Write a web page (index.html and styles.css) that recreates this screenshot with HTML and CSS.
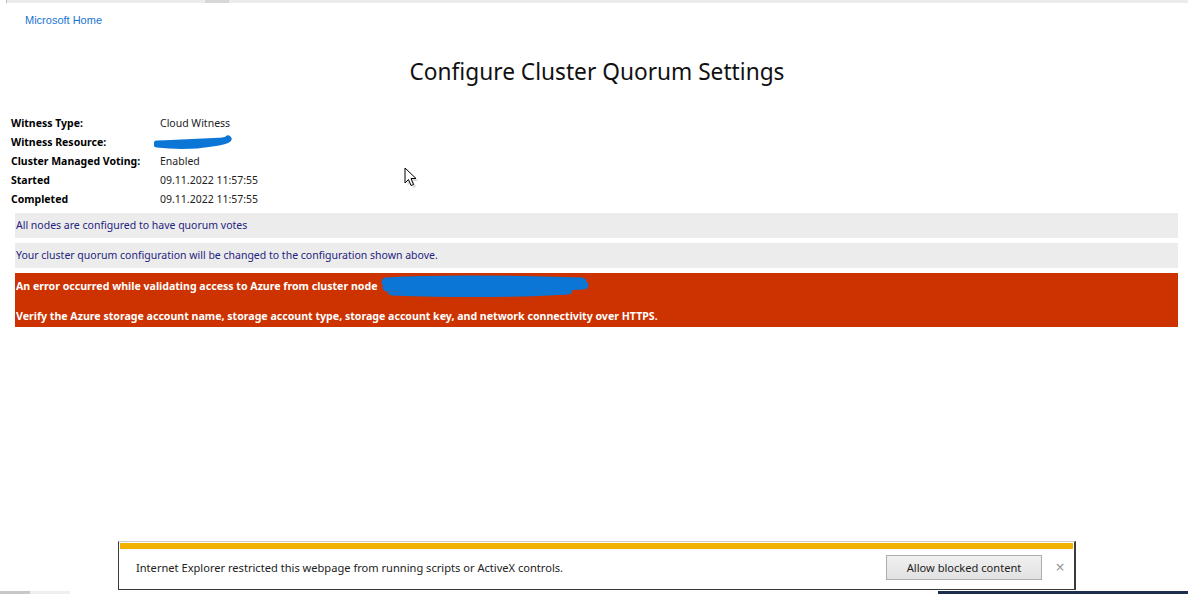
FILE: index.html
```html
<html>
	<head>
		<link rel="stylesheet" href="styles.css">
	</head>
	<body>
		<div class="topline"><span class="topline-tab"></span></div>
		<a class="home" href="#">Microsoft Home</a>
		<h1 class="title">Configure Cluster Quorum Settings</h1>

		<table class="summary">
			<tr><td class="label">Witness Type:</td><td class="value">Cloud Witness</td></tr>
			<tr><td class="label">Witness Resource:</td><td class="value">
				<svg class="scribble-small" width="80" height="16" viewBox="0 0 80 16"><path d="M3 10 C 20 12, 40 12, 58 9 C 66 8, 72 7, 74 5" fill="none" stroke="#0b76d6" stroke-width="7" stroke-linecap="round"/><path d="M6 9 L 70 6" fill="none" stroke="#0b76d6" stroke-width="5" stroke-linecap="round"/></svg>
			</td></tr>
			<tr><td class="label">Cluster Managed Voting:</td><td class="value">Enabled</td></tr>
			<tr><td class="label">Started</td><td class="value">09.11.2022 11:57:55</td></tr>
			<tr><td class="label">Completed</td><td class="value">09.11.2022 11:57:55</td></tr>
		</table>

		<div class="msg info">All nodes are configured to have quorum votes</div>
		<div class="msg info">Your cluster quorum configuration will be changed to the configuration shown above.</div>
		<div class="msg error">
			<p>An error occurred while validating access to Azure from cluster node <svg class="scribble-big" width="214" height="24" viewBox="0 0 214 24"><path d="M8 8 C 60 5, 140 6, 204 8 M 9 13 C 70 14, 150 14, 206 11 M 14 17 C 70 19, 140 19, 190 16" fill="none" stroke="#0b76d6" stroke-width="9" stroke-linecap="round"/></svg></p>
			<p>Verify the Azure storage account name, storage account type, storage account key, and network connectivity over HTTPS.</p>
		</div>

		<svg class="cursor" width="14" height="22" viewBox="0 0 14 22">
			<path d="M2 2 L2 17 L5.5 13.5 L8 19.5 L10.5 18.5 L8 12.5 L13 12.5 Z" fill="#999" opacity="0.35" transform="translate(1.5 1.5)"/>
			<path d="M1 1 L1 16 L4.5 12.5 L7 18.5 L9.5 17.5 L7 11.5 L12 11.5 Z" fill="#fff" stroke="#000" stroke-width="1"/>
		</svg>

		<div class="notify">
			<div class="notify-row">
				<span class="notify-text">Internet Explorer restricted this webpage from running scripts or ActiveX controls.</span>
				<button class="allow">Allow blocked content</button>
				<span class="close">&#215;</span>
			</div>
		</div>

		<div class="taskbar-left"></div>
		<div class="taskbar-right"></div>
	</body>
</html>
```

FILE: styles.css
```css
*{
	margin: 0;
	padding: 0;
}
body{
	font-family: "Noto Sans", "Open Sans", sans-serif;
	background: #fff;
	color: #000;
	width: 1188px;
	height: 594px;
	overflow: hidden;
	position: relative;
}
.topline{
	height: 3px;
	margin-left: 6px;
	border-left: 1px solid #bbb;
	background: #ececec;
	display: flex;
}
.topline-tab{
	margin-left: 198px;
	width: 24px;
	background: #d8d8d8;
}
.home{
	display: block;
	margin: 9px 0 0 25px;
	width: 90px;
	font-family: "Liberation Sans", Arial, sans-serif;
	font-size: 11px;
	line-height: 16px;
	color: #1a74d2;
	text-decoration: none;
}
.title{
	margin-top: 28px;
	text-align: center;
	font-size: 22.7px;
	font-weight: normal;
	line-height: 32px;
	color: #111;
	padding-left: 6px;
}
.summary{
	margin: 25px 0 0 9px;
	border-collapse: collapse;
	font-size: 10.5px;
}
.summary td{
	height: 19px;
	padding: 0 2px;
	vertical-align: middle;
}
.label{
	width: 145px;
	font-weight: bold;
}
.value{
	color: #222;
}
.scribble-small{
	display: block;
	margin-left: -6px;
}
.msg{
	margin: 5px 10px 0 15px;
	padding-left: 1px;
	font-size: 10.5px;
}
.info{
	height: 25px;
	line-height: 25px;
	background: #ececec;
	color: #24247e;
}
.error{
	height: 54px;
	background: #cc3300;
	color: #fff;
	font-weight: bold;
	font-size: 10.6px;
	padding-top: 1px;
	box-sizing: border-box;
}
.error p{
	height: 24px;
	line-height: 24px;
	white-space: nowrap;
}
.error p + p{
	margin-top: 6px;
}
.scribble-big{
	vertical-align: middle;
	margin-left: -2px;
	margin-top: -2px;
}
.cursor{
	position: absolute;
	left: 404px;
	top: 167px;
}
.notify{
	position: absolute;
	left: 118px;
	top: 541px;
	width: 958px;
	height: 49px;
	box-sizing: border-box;
	border: 1px solid #3a3a3a;
	border-right-width: 2px;
	border-top: 1px solid #ccc;
	background: #fff;
	padding-top: 1px;
}
.notify::before{
	content: "";
	display: block;
	height: 6px;
	margin: 0 1px 0 1px;
	background: #f2b100;
}
.notify-row{
	display: flex;
	align-items: center;
	height: 36px;
	padding: 0 0 0 17px;
	font-family: "Noto Sans", "Open Sans", sans-serif;
	font-size: 11.1px;
	color: #222;
}
.notify-text{
	flex: 1;
}
.allow{
	width: 156px;
	height: 25px;
	border: 1px solid #adadad;
	background: linear-gradient(#f0f0f0, #e2e2e2);
	font-family: "Noto Sans", "Open Sans", sans-serif;
	font-size: 11.1px;
	color: #222;
}
.close{
	width: 28px;
	margin-left: 4px;
	text-align: center;
	font-size: 16px;
	color: #9a9a9a;
}
.taskbar-left{
	position: absolute;
	left: 0;
	top: 591px;
	width: 100px;
	height: 3px;
	background: linear-gradient(90deg, #c8c8c8 0, #c8c8c8 30px, #eee 30px, #eee 70px, #fff 70px);
}
.taskbar-right{
	position: absolute;
	left: 938px;
	top: 591px;
	width: 250px;
	height: 3px;
	background: #1c2d4d;
}
```
